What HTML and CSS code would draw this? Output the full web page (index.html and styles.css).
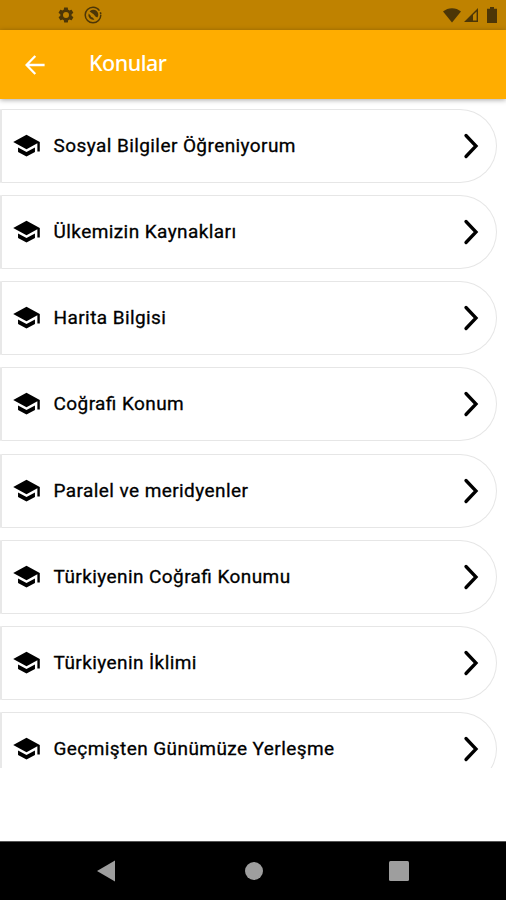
FILE: index.html
```html
<!DOCTYPE html>
<html>
<head>
<meta charset="utf-8">
<title>Konular</title>
<link rel="stylesheet" href="styles.css">
</head>
<body>
<svg width="0" height="0" class="defs">
  <symbol id="school" viewBox="0 0 24 24"><path d="M5 13.600v3.700L12 21l7-3.700v-3.700L12 17.400l-7-3.800zM12 3L1 9l11 6 9-4.910V17h2V9L12 3z"/></symbol>
  <symbol id="chevron" viewBox="0 0 16 26"><path d="M3 2.500l10 10.500L3 23.500" fill="none" stroke="#000" stroke-width="3.300" stroke-linecap="round" stroke-linejoin="miter"/></symbol>
</svg>
<div class="screen">
  <div class="status">
    <div class="group">
      <svg width="18" height="18" viewBox="0 0 24 24"><path fill-rule="evenodd" d="M19.4 13c0-.3.1-.6.1-1s0-.7-.1-1l2.1-1.6c.2-.2.2-.4.1-.6l-2-3.500c-.1-.2-.4-.3-.6-.2l-2.500 1c-.5-.4-1.100-.7-1.700-1l-.4-2.600c0-.2-.2-.4-.5-.4h-4c-.2 0-.4.2-.5.4l-.4 2.600c-.6.3-1.200.6-1.700 1l-2.500-1c-.2-.1-.5 0-.6.2l-2 3.500c-.1.2-.1.4.1.6L4.500 11c0 .3-.1.6-.1 1s0 .7.1 1l-2.100 1.600c-.2.2-.2.4-.1.6l2 3.500c.1.2.4.3.6.2l2.500-1c.5.4 1.100.7 1.700 1l.4 2.600c0 .2.200.4.500.4h4c.2 0 .4-.2.500-.4l.4-2.600c.6-.3 1.200-.6 1.700-1l2.500 1c.2.1.5 0 .6-.2l2-3.500c.1-.2.1-.4-.1-.6zM12 16a4 4 0 1 1 0-8 4 4 0 0 1 0 8z"/></svg>
      <svg width="18" height="18" viewBox="0 0 18 18"><circle cx="9" cy="9" r="7.800" fill="none" stroke="#4c3607" stroke-width="1.500" stroke-dasharray="44 2 2 1"/><path d="M4.600 7.500A4.700 4.700 0 0 0 10.400 13.500L8.600 11.600A2.500 2.500 0 0 1 6.500 9.500zM5.600 5.600A4.800 4.800 0 0 1 13.300 11.500L11.700 10.800 9.600 8.300z"/></svg>
    </div>
    <div class="group right">
      <svg width="18" height="15" viewBox="0 0 18 15"><path d="M0 3.500C5-1 13-1 18 3.500L9 14.500z"/></svg>
      <svg width="14" height="14" viewBox="0 0 14 14"><path fill-rule="evenodd" d="M14 0v14H0zM12.600 3.400L9 7v5.600h3.600z"/></svg>
      <svg width="10" height="16" viewBox="0 0 10 16"><path d="M3 0h4v1.800h3V16H0V1.800h3z"/></svg>
    </div>
  </div>
  <header class="bar">
    <svg width="20" height="20" viewBox="0 0 20 20"><path d="M19.600 10H2M10.300 1L1.500 10l8.800 9" fill="none" stroke="#fff" stroke-width="2.300"/></svg>
    <h1>Konular</h1>
  </header>
  <main class="list">
    <div class="card"><svg class="school"><use href="#school"/></svg><span>Sosyal Bilgiler Öğreniyorum</span><svg class="chevron"><use href="#chevron"/></svg></div>
    <div class="card"><svg class="school"><use href="#school"/></svg><span>Ülkemizin Kaynakları</span><svg class="chevron"><use href="#chevron"/></svg></div>
    <div class="card"><svg class="school"><use href="#school"/></svg><span>Harita Bilgisi</span><svg class="chevron"><use href="#chevron"/></svg></div>
    <div class="card"><svg class="school"><use href="#school"/></svg><span>Coğrafi Konum</span><svg class="chevron"><use href="#chevron"/></svg></div>
    <div class="card"><svg class="school"><use href="#school"/></svg><span>Paralel ve meridyenler</span><svg class="chevron"><use href="#chevron"/></svg></div>
    <div class="card"><svg class="school"><use href="#school"/></svg><span>Türkiyenin Coğrafi Konumu</span><svg class="chevron"><use href="#chevron"/></svg></div>
    <div class="card"><svg class="school"><use href="#school"/></svg><span>Türkiyenin İklimi</span><svg class="chevron"><use href="#chevron"/></svg></div>
    <div class="card"><svg class="school"><use href="#school"/></svg><span>Geçmişten Günümüze Yerleşme</span><svg class="chevron"><use href="#chevron"/></svg></div>
  </main>
  <div class="spacer"></div>
  <nav class="nav">
    <svg width="18" height="22" viewBox="0 0 18 22"><path d="M18 0.500v21L0 11z"/></svg>
    <svg class="home" width="18" height="20" viewBox="0 0 18 20"><circle cx="9" cy="10" r="9"/></svg>
    <svg width="20" height="20" viewBox="0 0 20 20"><rect width="20" height="20" rx="1.500"/></svg>
  </nav>
</div>
</body>
</html>
```
FILE: styles.css
```css
* { box-sizing: border-box; }
body { margin: 0; background: #fff; }
svg { display: block; flex: none; }
.defs { display: none; }
.screen {
  width: 506px;
  height: 900px;
  display: flex;
  flex-direction: column;
  overflow: hidden;
}
.status {
  height: 30px;
  flex: none;
  background: #bf8200;
  display: flex;
  justify-content: space-between;
  align-items: center;
  padding: 0 9px 0 57px;
  fill: #4c3607;
}
.group { display: flex; align-items: center; gap: 9px; }
.group.right { gap: 3px; }
.group.right svg:last-child { margin-left: 6px; }
.bar {
  height: 69px;
  flex: none;
  background: #ffad00;
  display: flex;
  align-items: center;
  padding-left: 25px;
  gap: 44px;
  position: relative;
  box-shadow: 0 1px 5px rgba(0, 0, 0, .35);
}
.bar h1 {
  margin: 0 0 3px;
  font: 500 21.500px/30px "Noto Sans", sans-serif;
  letter-spacing: -.5px;
  color: #fff;
}
.list {
  height: 669px;
  flex: none;
  overflow: hidden;
  padding: 10px 9px 0 0;
  display: flex;
  flex-direction: column;
  gap: 12.150px;
}
.card {
  height: 74px;
  flex: none;
  display: flex;
  align-items: center;
  padding: 0 17.500px 0 10px;
  border: 1px solid #e6e6e6;
  border-left: 2px solid #e8e8e8;
  border-radius: 0 37px 37px 0;
  background: #fff;
}
.school { width: 29px; height: 29px; margin-bottom: 1px; }
.card span {
  flex: 1;
  margin-left: 12.500px;
  font: 400 19px/26px Roboto, sans-serif;
  letter-spacing: .42px;
  font-feature-settings: "liga" 1;
  -webkit-text-stroke: .3px #000;
  color: #000;
  white-space: nowrap;
}
.chevron { width: 16px; height: 26px; }
.spacer { flex: 1; }
.nav {
  height: 59px;
  flex: none;
  background: #000;
  border-top: 1px solid #555;
  display: flex;
  align-items: center;
  justify-content: space-between;
  padding: 0 97px;
  fill: #9e9e9e;
}
.home { margin-left: 3px; }
```
